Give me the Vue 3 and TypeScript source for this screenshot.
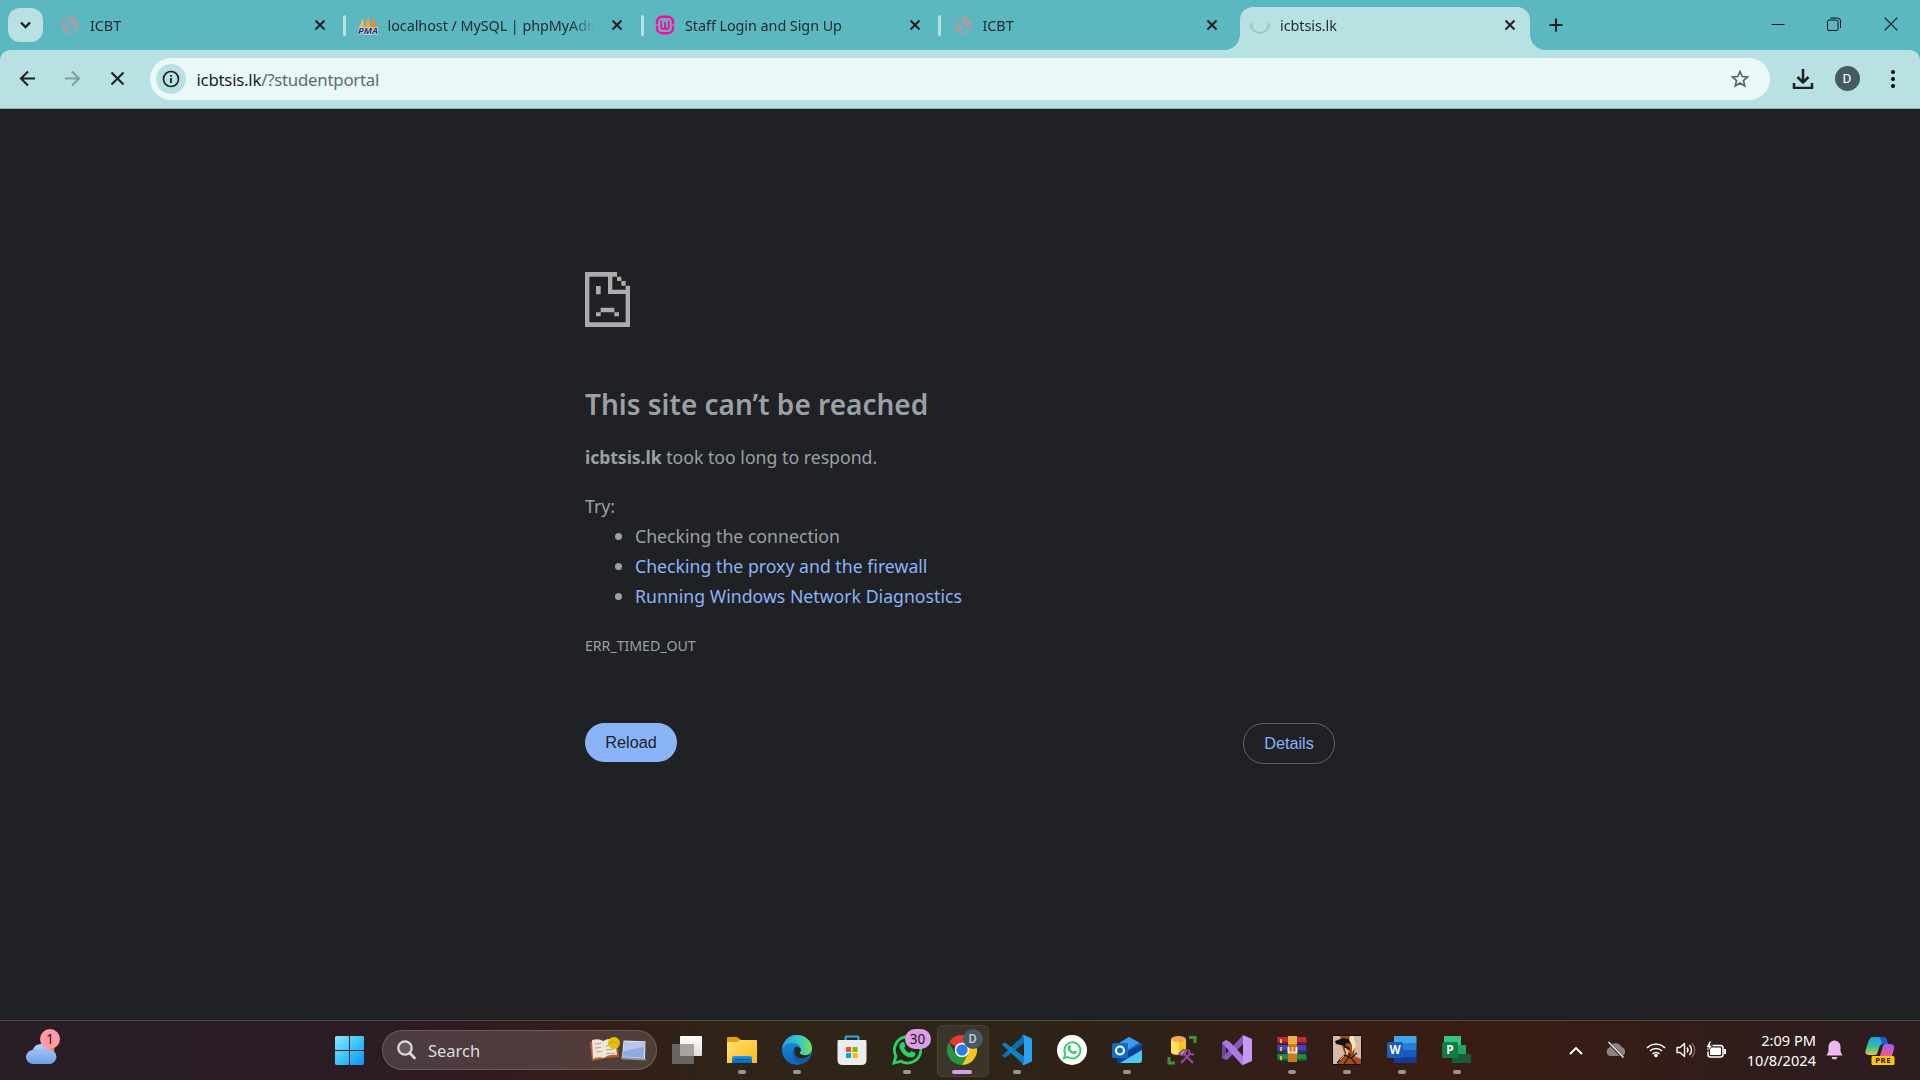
<script setup lang="ts">
interface Tab {
  title: string
  icon: 'globe' | 'pma' | 'wamp' | 'spinner'
  active?: boolean
}

interface TaskItem {
  name: string
  state?: 'open' | 'current'
}

const tabs: Tab[] = [
  { title: 'ICBT', icon: 'globe' },
  { title: 'localhost / MySQL | phpMyAdmin', icon: 'pma' },
  { title: 'Staff Login and Sign Up', icon: 'wamp' },
  { title: 'ICBT', icon: 'globe' },
  { title: 'icbtsis.lk', icon: 'spinner', active: true },
]

const tasks: TaskItem[] = [
  { name: 'taskview' },
  { name: 'explorer', state: 'open' },
  { name: 'edge', state: 'open' },
  { name: 'store' },
  { name: 'whatsapp', state: 'open' },
  { name: 'chrome', state: 'current' },
  { name: 'vscode', state: 'open' },
  { name: 'waweb' },
  { name: 'outlook', state: 'open' },
  { name: 'sql' },
  { name: 'vs' },
  { name: 'winrar', state: 'open' },
  { name: 'game', state: 'open' },
  { name: 'word', state: 'open' },
  { name: 'project', state: 'open' },
]
</script>

<template>
  <div class="screen">
    <header class="strip">
      <button class="tab-search" aria-label="Search tabs">
        <svg width="35" height="34" viewBox="0 0 35 34"><path d="M13 14.5l4.5 4.5 4.5-4.5" fill="none" stroke="#1f1f1f" stroke-width="2.3" /></svg>
      </button>
      <div class="tabs">
        <div v-for="(tab, i) in tabs" :key="i" class="tab" :class="{ active: tab.active, divided: i < 3 }">
          <svg v-if="tab.icon === 'globe'" class="fav" width="20" height="20" viewBox="0 0 20 20">
            <circle cx="10" cy="10" r="8" fill="none" stroke="#a3a1a6" stroke-width="1.5" />
            <path d="M9 2.200L15 4l2.800 4.500-1 3-3.800-1.200-1.500-1.800-2.500.2L8 6.500l2-1.200z M2.400 9l4.200 1 3.200 1.200.4 2.300-2.200 1-.4 2.800C4 16 2.400 13 2.400 9z" fill="#a3a1a6" />
          </svg>
          <svg v-else-if="tab.icon === 'pma'" class="fav" width="20" height="20" viewBox="0 0 20 20">
            <path d="M1 13L5 3l1 10z" fill="#fbb55c" /><path d="M6.500 13L10.500.5l1.800 12.500z" fill="#f9a13a" /><path d="M13 13L15 2l4 11z" fill="#f68a12" />
            <text x="0" y="19.300" font-size="8" font-weight="700" font-style="italic" textLength="20" lengthAdjust="spacingAndGlyphs" fill="#2c2c66" stroke="#e8eef5" stroke-width="1.200" paint-order="stroke">PMA</text>
          </svg>
          <svg v-else-if="tab.icon === 'wamp'" class="fav" width="20" height="20" viewBox="0 0 20 20">
            <rect x="2" y="1.800" width="16" height="16.400" rx="5" fill="none" stroke="#ff0aa0" stroke-width="2.400" />
            <path d="M0 10h20" stroke="#5bb8c1" stroke-width="1.200" />
            <path d="M6.200 5.500v6q0 2.500 2 2.500t1.800-2.500v-4.500v4.500q0 2.500 1.900 2.500t1.900-2.500v-6" fill="none" stroke="#ff0aa0" stroke-width="1.900" />
          </svg>
          <svg v-else class="fav" width="20" height="20" viewBox="0 0 20 20"><path d="M1 8v1a9 9 0 1 0 18 0v-1" fill="none" stroke="#98c8cb" stroke-width="2" /></svg>
          <span class="title">{{ tab.title }}</span>
          <svg class="close" width="12" height="12" viewBox="0 0 12 12"><path d="M1.500 1.500l9 9m0-9l-9 9" stroke="#1f1f1f" stroke-width="1.900" /></svg>
        </div>
      </div>
      <svg class="plus" width="14" height="14" viewBox="0 0 14 14"><path d="M7 .5v13M.5 7h13" stroke="#1f1f1f" stroke-width="2" /></svg>
      <div class="window-controls">
        <svg width="14" height="14" viewBox="0 0 14 14"><path d="M.5 7.500h13" stroke="#111" /></svg>
        <svg width="14" height="14" viewBox="0 0 14 14"><rect x=".5" y="3" width="10.500" height="10.500" rx="1.500" fill="none" stroke="#111" /><path d="M3.500 1h7a3 3 0 0 1 3 3v7" fill="none" stroke="#111" /></svg>
        <svg width="14" height="14" viewBox="0 0 14 14"><path d="M.7.7l12.600 12.600m0-12.600L.7 13.300" stroke="#111" stroke-width="1.100" /></svg>
      </div>
    </header>

    <div class="corner-row"><nav class="toolbar">
      <svg class="nav" width="45" height="45" viewBox="0 0 45 45"><path d="M30 22.500H16m7-7l-7 7 7 7" fill="none" stroke="#1f1f1f" stroke-width="2.100" /></svg>
      <svg class="nav" width="45" height="45" viewBox="0 0 45 45"><path d="M15 22.500h14m-7-7l7 7-7 7" fill="none" stroke="#7f9fa2" stroke-width="2.100" /></svg>
      <svg class="nav" width="45" height="45" viewBox="0 0 45 45"><path d="M16.500 16.500l12 12m0-12l-12 12" stroke="#1f1f1f" stroke-width="2.100" /></svg>
      <div class="omnibox">
        <span class="site-info">
          <svg width="18" height="18" viewBox="0 0 18 18"><circle cx="9" cy="9" r="7.500" fill="none" stroke="#1f1f1f" stroke-width="1.700" /><path d="M9 8v5M9 5v1.700" stroke="#1f1f1f" stroke-width="1.800" /></svg>
        </span>
        <span class="url"><b>icbtsis.lk</b>/?studentportal</span>
        <svg class="star" width="20" height="20" viewBox="0 0 20 20"><path d="M10 2.500l2.200 5 5.300.5-4 3.600 1.200 5.300-4.700-2.800-4.700 2.800 1.200-5.300-4-3.600 5.300-.5z" fill="none" stroke="#5f6368" stroke-width="1.700" /></svg>
      </div>
      <svg class="download" width="22" height="20" viewBox="0 0 22 20"><path d="M11 0v13M5.500 8l5.500 5.500L16.500 8M2 14v5h18v-5" fill="none" stroke="#1f1f1f" stroke-width="2.500" stroke-linejoin="round" /></svg>
      <span class="avatar">D</span>
      <svg class="menu" width="4" height="18" viewBox="0 0 4 18"><circle cx="2" cy="2" r="2" /><circle cx="2" cy="9" r="2" /><circle cx="2" cy="16" r="2" /></svg>
    </nav></div>

    <main class="page">
      <section class="error">
        <svg class="sad" width="45" height="55" viewBox="0 0 135 165">
          <path fill="#acacac" d="M0 0h96v14h13v13h13v14h13v124H0zM13 14v137h109V66H69V14zM82 14v39h40V41h-13V27H96V14zM33 42h14v25H33zM47 107h41v14h14v12H88v-12H47v12H33v-12h14z" fill-rule="evenodd" />
        </svg>
        <h1>This site can’t be reached</h1>
        <p class="reason"><strong>icbtsis.lk</strong> took too long to respond.</p>
        <p class="try">Try:</p>
        <ul>
          <li>Checking the connection</li>
          <li><a>Checking the proxy and the firewall</a></li>
          <li><a>Running Windows Network Diagnostics</a></li>
        </ul>
        <p class="code">ERR_TIMED_OUT</p>
        <div class="actions">
          <button class="reload">Reload</button>
          <button class="details">Details</button>
        </div>
      </section>
    </main>

    <footer class="taskbar">
      <div class="weather">
        <svg width="34" height="36" viewBox="0 0 34 36">
          <defs><linearGradient id="cloud" x2="0" y2="1"><stop stop-color="#b5d2fa" /><stop offset="1" stop-color="#6f9de8" /></linearGradient></defs>
          <circle cx="21" cy="20" r="7.500" fill="#f58a0b" />
          <path d="M7.500 35a7 7 0 0 1-1-14A9.500 9.500 0 0 1 24 20.500 7.300 7.300 0 0 1 24 35z" fill="url(#cloud)" />
          <path d="M6 21.500q6-1 9 3 4-5 9-3.500" fill="none" stroke="#8eb3f1" />
        </svg>
        <span class="count">1</span>
      </div>
      <svg class="start" width="29" height="29" viewBox="0 0 29 29">
        <defs><linearGradient id="win" gradientUnits="userSpaceOnUse" x1="0" y1="0" x2="29" y2="29"><stop stop-color="#8de4ff" /><stop offset=".5" stop-color="#3cc5fb" /><stop offset="1" stop-color="#0a93f5" /></linearGradient></defs>
        <path d="M1 0h13v14H0V1zM15 0h13l1 1v13H15zM0 15h14v14H1l-1-1zM15 15h14v13l-1 1H15z" fill="url(#win)" />
      </svg>
      <div class="search">
        <svg width="19" height="20" viewBox="0 0 19 20"><circle cx="8" cy="8" r="6.700" fill="#66595f" stroke="#dedadd" stroke-width="2.200" /><path d="M12.800 13l4.700 5" stroke="#dedadd" stroke-width="2.600" stroke-linecap="round" /></svg>
        <span>Search</span>
        <svg class="art" width="58" height="26" viewBox="0 0 58 26">
          <path d="M0 5l13-1 14 1 2 15-13 1-14 3z" fill="#bf5634" /><path d="M2 3q7-2 11 1l1 17q-6-2-11 1zM13 4q5-3 12-2l2 16q-8-1-13 3z" fill="#eee7d8" />
          <path d="M5 7l6-.5M5 11l6-.5M6 15l6-.5M16 9l7-1M16 13l8-1M16 17l9-1" stroke="#aaa194" />
          <circle cx="24" cy="6" r="6" fill="#e7bf05" /><path d="M18.500 7l5-3 6 4" fill="none" stroke="#c69d00" />
          <path d="M33.500 3.500l22 .8-.5 18-23-1.800z" fill="#dfe5f4" /><path d="M34.500 4.800l20 .7-.6 15.500-21-1.500z" fill="#8fabe0" /><path d="M34.500 4.800l20 .7-.2 4-20.700 5z" fill="#b4c6ec" /><path d="M30.500 20l24.500 1.500 1.500 2-24.500-1.200z" fill="#8e97ad" />
        </svg>
      </div>
      <div class="apps">
        <div v-for="item in tasks" :key="item.name" class="app" :class="item.state">
          <svg v-if="item.name === 'taskview'" width="30" height="30" viewBox="0 0 30 30">
            <defs><linearGradient id="tv" x2="0" y2="1"><stop stop-color="#fff" /><stop offset="1" stop-color="#dcdcdc" /></linearGradient></defs>
            <rect y="9" width="22" height="20" rx="1" fill="#666563" /><rect x="8" y="1" width="22" height="20" rx="1" fill="url(#tv)" /><path d="M8 9h14v12H8z" fill="#a5a4a3" />
          </svg>
          <svg v-else-if="item.name === 'explorer'" width="30" height="30" viewBox="0 0 30 30">
            <defs><linearGradient id="fold" x2="1" y2="1"><stop stop-color="#ffe179" /><stop offset="1" stop-color="#fdbb12" /></linearGradient><linearGradient id="dock" x2="0" y2="1"><stop stop-color="#159ce8" /><stop offset="1" stop-color="#0866b9" /></linearGradient></defs>
            <path d="M0 3q0-1 1-1h9l4 3v6H0z" fill="#e7a00d" /><path d="M0 7h10l3-2h16q1 0 1 1v22H0z" fill="url(#fold)" /><path d="M5 28v-5q0-2 2-2h16q2 0 2 2v5z" fill="url(#dock)" /><path d="M8 24.500h14" stroke="#064f91" />
          </svg>
          <svg v-else-if="item.name === 'edge'" width="30" height="30" viewBox="0 0 30 30">
            <defs><linearGradient id="e1" x2="1"><stop stop-color="#279de0" /><stop offset=".55" stop-color="#34c6d1" /><stop offset="1" stop-color="#73e34c" /></linearGradient><linearGradient id="e2" x2="0" y2="1"><stop stop-color="#1a92dc" /><stop offset="1" stop-color="#0c65bd" /></linearGradient></defs>
            <circle cx="15" cy="15" r="15" fill="url(#e2)" />
            <path d="M1 10C4 3 9 0 15 0c8 0 15 6 15 13 0 6-5 8-9 7-3-.5-4-2-2.500-3.500C20 14 18 8 11 8 6 8 2 10 0 15q0-3 1-5z" fill="url(#e1)" />
            <path d="M12 13c-3 4-1 15 8 16 3-1 6-3 8-7-3 2-8 3-12 0-4-2-5-6-4-9z" fill="#1556a3" />
            <path d="M13 12c-2 5 0 9 4 11 4 1 8 0 11-3l2-5c-1 5-6 6-9 5-3-.5-4-2-2.500-3.500 1-2 0-5-5.500-4.500z" fill="#2b2619" />
          </svg>
          <svg v-else-if="item.name === 'store'" width="30" height="30" viewBox="0 0 30 30">
            <path d="M8.500 6V2.500q0-1 1-1h11q1 0 1 1V6" fill="none" stroke="#23b1e4" stroke-width="2" /><path d="M.5 6q0-1 1-1h27q1 0 1 1v19q0 5-5 5h-19q-5 0-5-5z" fill="#ececec" />
            <path d="M9 12h5v5H9z" fill="#f25022" /><path d="M15.500 12h5v5h-5z" fill="#7fba00" /><path d="M9 18h5v5H9z" fill="#00a4ef" /><path d="M15.500 18h5v5h-5z" fill="#ffb900" />
          </svg>
          <svg v-else-if="item.name === 'whatsapp'" width="30" height="30" viewBox="0 0 30 30">
            <path d="M2 28l2-7A13.200 13.200 0 1 1 9 26.200z" fill="none" stroke="#25d366" stroke-width="2.800" /><path d="M10 7l2 .3 1.500 3.700-1.500 2q2 3.500 5.500 5l2-2 4 2q0 4-4 4.500-8 0-12-9.500Q7 9 10 7z" fill="#25d366" />
          </svg>
          <svg v-else-if="item.name === 'chrome'" width="30" height="30" viewBox="0 0 30 30">
            <path d="M15 15L2 7.500A15 15 0 0 1 28 7.500z" fill="#e33b2e" /><path d="M15 15V7.500h13A15 15 0 0 1 15 30z" fill="#fcc31e" /><path d="M15 15l6.500 3.700L15 30A15 15 0 0 1 2 7.500L8.500 18.700z" fill="#24963f" /><circle cx="15" cy="15" r="7.300" fill="#fff" /><circle cx="15" cy="15" r="5.700" fill="#2b7de9" />
          </svg>
          <svg v-else-if="item.name === 'vscode'" width="30" height="30" viewBox="0 0 30 30">
            <path d="M0 20.500L22 0v8L3.500 22.500q-1 .5-2-.5z" fill="#0b6fb5" /><path d="M0 9.500L1.500 8q1-1 2 0L22 21.500V30z" fill="#117fc8" /><path d="M22 0l7 3q1 .5 1 1.500v21q0 1-1 1.500l-7 3q-1 .3-2-1l2-1V2l-2-1q1-1.300 2-1z" fill="#2ba2ee" />
          </svg>
          <svg v-else-if="item.name === 'waweb'" width="30" height="30" viewBox="0 0 30 30">
            <circle cx="15" cy="15" r="15" fill="#fff" /><path d="M7 23l1.200-4.200A8 8 0 1 1 11 22z" fill="none" stroke="#39cb70" stroke-width="1.900" /><path d="M12 10l1.300.2.8 2.300-.8 1.200q1 2 3 2.900l1.200-1.200 2.400 1.200q0 2.200-2.400 2.600-4.900-.2-7-5.500Q10.500 11.200 12 10z" fill="#39cb70" />
          </svg>
          <svg v-else-if="item.name === 'outlook'" width="30" height="30" viewBox="0 0 30 30">
            <path d="M5 9l12-7 13 7v16q0 3-3 3H8q-3 0-3-3z" fill="#1268bc" /><path d="M8 7.500L17 2l10 5.500-12 8z" fill="#3a9de5" /><path d="M30 9v6L8 28l-3-2v-4z" fill="#0c3f8d" /><path d="M30 15v10q0 3-3 3H8z" fill="#4bc8f5" /><rect y="8" width="16" height="15" rx="1.500" fill="#0f6cc8" /><circle cx="8" cy="15.500" r="4" fill="none" stroke="#fff" stroke-width="2.200" />
          </svg>
          <svg v-else-if="item.name === 'sql'" width="30" height="30" viewBox="0 0 30 30">
            <path d="M4 4v13q0 3 7.500 3T19 17V4z" fill="#ffe15d" /><path d="M12 4h7v13q0 3-7 3z" fill="#f9c719" /><ellipse cx="11.500" cy="4" rx="7.500" ry="3" fill="#efa756" /><path d="M22 2.500h6V8M2 22v6h6" fill="none" stroke="#44923f" stroke-width="3" /><path d="M14 28l10-10M16 18l10 10" fill="none" stroke="#8b4aa0" stroke-width="2.300" /><path d="M12 19l4-4 4 .5-5 5zM22 14.500l.5 4.500 4.500.5" fill="none" stroke="#8b4aa0" stroke-width="1.800" />
          </svg>
          <svg v-else-if="item.name === 'vs'" width="30" height="30" viewBox="0 0 30 30">
            <path d="M0 7l4-2 4 4v12l-4 4-4-2z" fill="#68489c" /><path d="M4 11v8l4-4z" fill="#2e2115" /><path d="M0 23L21 0v9L5 25z" fill="#8659bd" /><path d="M4 5l4 2 13 14v9h-1L0 8z" fill="#a878e7" /><path d="M21 0l9 4v22l-9 4z" fill="#c698fa" />
          </svg>
          <svg v-else-if="item.name === 'winrar'" width="30" height="30" viewBox="0 0 30 30">
            <path d="M0 2h29l1 7H1z" fill="#c72643" /><path d="M0 10h29l1 8H1z" fill="#4546b9" /><path d="M0 19h29l1 7H1z" fill="#159142" /><path d="M1 7h29v2H1zM1 15h29v3H1zM1 24h29v2H1z" fill="#19173a" opacity=".5" /><path d="M11 1h9v26h-9z" fill="#d3771f" /><path d="M11 1h9v8h-9z" fill="#e2b548" /><path d="M3 4h2v4H3zM3 12h2v4H3zM3 21h2v4H3z" fill="#e6b836" /><path d="M11.500 12v5.500h8V12" fill="none" stroke="#e8e5dc" stroke-width="2" /><path d="M15.500 12v5" stroke="#f6d584" stroke-width="1.600" />
          </svg>
          <svg v-else-if="item.name === 'game'" width="30" height="30" viewBox="0 0 30 30">
            <path d="M.5.5h29v29H.5z" fill="#d6baa7" stroke="#111" /><path d="M8 1h14l1 7-1 13 7 3v5H5l3-6 5-3-3-9z" fill="#a84c16" /><path d="M3 6l8-3 12 2v4l-9-1-1 3-9-2zM12 10l6 3-2 7-3-3z" fill="#15110e" /><path d="M18 1h4l2 10-4 6v-7l-3-5z" fill="#eee9ba" /><path d="M13 14l5 6-6 9M5 28l8-8 6 3 6-5M19 23l5 6" fill="none" stroke="#1d1311" stroke-width="1.200" /><path d="M13 13l4 3-2 4zM8 25l4-4" fill="#dfb49a" stroke="#e5b89b" />
          </svg>
          <svg v-else-if="item.name === 'word'" width="30" height="30" viewBox="0 0 30 30">
            <path d="M7 1h21.500q1 0 1 1v6H7z" fill="#41a5ee" /><path d="M7 8h22.500v7H7z" fill="#2b7cd3" /><path d="M7 15h22.500v7H7z" fill="#185abd" /><path d="M7 22h22.500v6H7z" fill="#103f91" /><rect y="7" width="16" height="16" rx="1.500" fill="#1a5dbf" /><text x="8" y="19" text-anchor="middle" font-size="11.500" font-weight="700" fill="#fff">W</text>
          </svg>
          <svg v-else width="30" height="30" viewBox="0 0 30 30">
            <path d="M2 1h17v9H2z" fill="#33c481" /><path d="M12 10h12v9H12z" fill="#21a366" /><path d="M10 19h19v9H10z" fill="#185c37" /><rect y="7" width="16" height="16" rx="1.500" fill="#107c41" /><text x="8" y="19" text-anchor="middle" font-size="12" font-weight="700" fill="#fff">P</text>
          </svg>
          <span v-if="item.name === 'whatsapp'" class="badge wide">30</span>
          <span v-if="item.name === 'chrome'" class="badge profile">D</span>
          <i v-if="item.state" class="mark"></i>
        </div>
      </div>
      <div class="tray">
        <svg class="t-up" width="14" height="9" viewBox="0 0 14 9"><path d="M1 8l6-6 6 6" fill="none" stroke="#fff" stroke-width="1.900" /></svg>
        <svg class="t-cloud" width="22" height="18" viewBox="0 0 22 18"><path d="M5 15a4.500 4.500 0 0 1-.5-8.500A6.500 6.500 0 0 1 16.500 6a4.700 4.700 0 0 1 .5 9z" fill="#8e8280" /><path d="M3 1l15 15.500" stroke="#38231f" stroke-width="2.600" /><path d="M3.500 1L18.500 16.500" stroke="#eee" stroke-width="1.400" /></svg>
        <svg class="t-wifi" width="20" height="16" viewBox="0 0 20 16"><g fill="none" stroke="#fff" stroke-width="1.600"><path d="M1 6a12.800 12.800 0 0 1 18 0M4 9a8.500 8.500 0 0 1 12 0M6.500 12a5 5 0 0 1 7 0" /></g><circle cx="10" cy="13.500" r="1.800" fill="#fff" /></svg>
        <svg class="t-sound" width="20" height="18" viewBox="0 0 20 18"><g fill="none" stroke="#fff" stroke-width="1.400" stroke-linejoin="round"><path d="M1 6.500v5h3l4.500 4V2.500L4 6.500zM11 6.500q2 2.500 0 5M13.500 4q4 5 0 10" /><path d="M16 2q5.500 7 0 14" stroke="#7b6763" /></g></svg>
        <svg class="t-bat" width="20" height="18" viewBox="0 0 20 18"><rect x="2" y="4.500" width="15" height="11.500" rx="2.500" fill="none" stroke="#fff" stroke-width="1.500" /><rect x="4" y="6.500" width="11" height="7.500" rx="1" fill="#fff" /><path d="M18 8h2v5h-2z" fill="#fff" /><path d="M3.500 0L0 6.500h2.500L1.500 11 6.500 4.500H4L5.500 0z" fill="#fff" stroke="#301c19" stroke-width=".8" /></svg>
        <div class="clock"><span>2:09 PM</span><span>10/8/2024</span></div>
        <svg class="bell" width="17" height="20" viewBox="0 0 17 20"><path d="M8.500.5a6 6 0 0 1 6 6v5l2 4H.5l2-4v-5a6 6 0 0 1 6-6zM5.500 17h6q-.5 2.500-3 2.500T5.500 17z" fill="#efb8f0" /></svg>
        <svg class="copilot" width="30" height="29" viewBox="0 0 30 29">
          <defs><linearGradient id="c1" x2="0" y2="1"><stop stop-color="#1e9ee8" /><stop offset=".55" stop-color="#35c0a1" /><stop offset="1" stop-color="#e8cb24" /></linearGradient><linearGradient id="c2" x2="0" y2="1"><stop stop-color="#a35be9" /><stop offset="1" stop-color="#f05b91" /></linearGradient></defs>
          <path d="M8 1h10q3 0 4 4l1 3h-5q-3 0-4 4l-2 6q-1 1-3 1H4q-5 0-3-6l2.500-8Q5 1 8 1z" fill="url(#c1)" /><path d="M14 1h4q3 0 4 4l1 3h-6q-1-5-3-7z" fill="#1b5ed0" /><path d="M20 8h5q5 0 4 5l-2 7H15l3-10q.8-2 2-2z" fill="url(#c2)" />
          <rect x="6.500" y="20" width="23" height="9" rx="1.500" fill="#fdc50c" /><text x="18.200" y="27.300" font-size="7.800" font-weight="700" text-anchor="middle" letter-spacing=".6" fill="#1b1711">PRE</text>
        </svg>
      </div>
    </footer>
  </div>
</template>

<style>
body { background: #202124; overflow: hidden; }
</style>

<style scoped>
* { box-sizing: border-box; }
.screen { width: 1920px; height: 1080px; display: flex; flex-direction: column; font-family: 'Noto Sans', 'Open Sans', sans-serif; background: #202124; overflow: hidden; }
svg { display: block; flex: none; }
button { font: inherit; border: 0; padding: 0; }
.strip { height: 50px; flex: none; display: flex; background: #5bb8c1; }
.tab-search { width: 35px; height: 34px; margin: 8px 7px 0 8px; border-radius: 12px; background: #b8e1e4; flex: none; }
.tabs { display: flex; width: 1487.5px; flex: none; }
.tab { width: 297.5px; height: 50px; display: flex; align-items: center; padding-left: 10px; position: relative; font-size: 14.400px; color: #1f2a2c; }
.fav { margin-right: 10px; }
.title { width: 206px; overflow: hidden; white-space: nowrap; line-height: 22px; padding-top: 1px; letter-spacing: -.06px; -webkit-mask-image: linear-gradient(90deg, #000 182px, transparent 208px); mask-image: linear-gradient(90deg, #000 182px, transparent 208px); }
.close { margin-left: 17.5px; }
.divided::after { content: ''; position: absolute; left: 293px; top: 15px; width: 3px; height: 21px; border-radius: 2px; background: #b8e1e4; }
.active { z-index: 0; }
.active::before { content: ''; position: absolute; z-index: -1; left: 0; top: 7px; width: 290px; height: 43px; border-radius: 13px 13px 0 0; background: #b8e1e4; }
.active::after { content: ''; position: absolute; z-index: -1; left: -15px; bottom: 0; width: 320px; height: 15px; background: radial-gradient(circle at 0 0, transparent 14.5px, #b8e1e4 15px) 0 0 / 15px 15px no-repeat, radial-gradient(circle at 100% 0, transparent 14.500px, #b8e1e4 15px) 100% 0 / 15px 15px no-repeat; }
.plus { margin: 18px 0 0 11.5px; }
.window-controls { display: flex; gap: 42px; margin: 17px 22px 0 auto; }
.window-controls svg:last-child { margin-left: 1px; }
.corner-row { height: 59px; flex: none; background: #5bb8c1; }
.toolbar { height: 59px; display: flex; align-items: center; padding: 0 25.500px 1px 5px; background: #b8e1e4; border-bottom: 1px solid #8fabad; border-radius: 10px 10px 0 0; }
.omnibox { width: 1620px; height: 42px; margin-left: 10px; padding: 0 20px 0 6px; border-radius: 21px; background: #ebf8f8; display: flex; align-items: center; flex: none; }
.site-info { width: 30px; height: 30px; border-radius: 50%; background: #b8e1e4; display: flex; align-items: center; justify-content: center; }
.url { margin-left: 10.5px; padding-top: 1px; font-size: 16.800px; letter-spacing: -.23px; color: #5f6b70; white-space: nowrap; }
.url b { font-weight: 400; color: #1f1f1f; }
.star { margin-left: auto; margin-top: 1px; }
.download { margin-left: 21.500px; }
.avatar { width: 25px; height: 25px; margin: 0 31px 0 auto; border-radius: 50%; background: #455a64; color: #fff; font: 13.500px/25px Roboto, sans-serif; text-align: center; }
.nav { flex: none; }
.page { height: 911px; flex: none; display: flex; justify-content: center; color: #9aa0a6; }
.error { width: 750px; padding-top: 163.300px; font-size: 17.700px; line-height: 30px; }
h1, p, ul { margin: 0; padding: 0; }
h1 { font-size: 28px; font-weight: 600; line-height: 36px; margin-top: 58.700px; white-space: nowrap; }
.reason { margin-top: 20px; }
.reason strong { letter-spacing: -.1px; }
.try { margin-top: 19px; }
ul { list-style: none; }
li { padding-left: 50px; position: relative; }
li::before { content: ''; position: absolute; left: 30px; top: 12px; width: 7px; height: 7px; border-radius: 50%; background: #9aa0a6; }
a { color: #8ab4f8; }
.code { margin-top: 20px; font-size: 14.200px; letter-spacing: -.05px; }
.actions { display: flex; justify-content: space-between; margin-top: 62px; font-family: 'Liberation Sans', sans-serif; }
.reload, .details { width: 92px; border-radius: 21px; font-size: 16.250px; }
.reload { height: 39px; background: #8ab4f8; color: #202124; }
.details { height: 41px; background: transparent; border: 1px solid #5f6368; color: #8ab4f8; padding-bottom: 1px; }
.taskbar { height: 60px; flex: none; display: flex; border-top: 1px solid #514548; background: linear-gradient(90deg, #291d26 0, #291c26 280px, #301b20 460px, #351d1a 590px, #2f2417 740px, #2d2518 950px, #2f2117 1140px, #381d15 1380px, #391c14 1540px, #301d1b 1720px, #2d1d1f 1920px); }
.weather { width: 36px; height: 40px; margin: 8px 0 0 26px; position: relative; }
.count { position: absolute; left: 14px; top: 0; width: 20px; height: 20px; border-radius: 50%; background: #ff99a4; color: #2b1c20; font-size: 14px; line-height: 20px; text-align: center; }
.start { margin: 15px 0 0 273px; }
.search { width: 275px; height: 40px; margin: 9px 2px 0 18px; display: flex; align-items: center; padding: 0 8px 0 14px; border: 1px solid rgba(255, 255, 255, .16); border-radius: 20px; background: rgba(255, 255, 255, .14); color: #dedadb; font-size: 16.500px; }
.search span { margin-left: 12px; }
.art { margin-left: auto; }
.apps { display: flex; }
.app { width: 55px; height: 59px; display: flex; justify-content: center; padding-top: 14px; position: relative; }
.current::before { content: ''; position: absolute; left: 2.500px; top: 4px; width: 50px; height: 50px; border-radius: 5px; background: rgba(255, 255, 255, .07); border: 1px solid rgba(255, 255, 255, .07); }
.current svg { position: relative; }
.mark { position: absolute; left: 23.500px; top: 49px; width: 8px; height: 4px; border-radius: 2px; background: #9c9692; }
.current .mark { left: 17.500px; width: 20px; background: #da9fe2; }
.badge { position: absolute; top: 8px; height: 20px; border-radius: 10px; text-align: center; line-height: 20px; }
.wide { left: 25.500px; width: 26px; background: #dc9fe5; color: #21151f; font-size: 13.500px; }
.profile { left: 28.500px; width: 20px; background: #455a64; color: #c4d0d5; font: 500 12.500px/20px Roboto, sans-serif; }
.tray { margin-left: auto; display: flex; align-items: center; height: 58px; padding-right: 25px; }
.t-cloud { margin-left: 22px; }
.t-wifi { margin-left: 19px; }
.t-sound { margin-left: 10px; }
.t-bat { margin-left: 10px; }
.clock { width: 84px; margin-left: 6px; display: flex; flex-direction: column; align-items: flex-end; color: #fff; font-size: 14.600px; line-height: 20px; }
.bell { margin-left: 10px; }
.copilot { margin-left: 22px; }
</style>
